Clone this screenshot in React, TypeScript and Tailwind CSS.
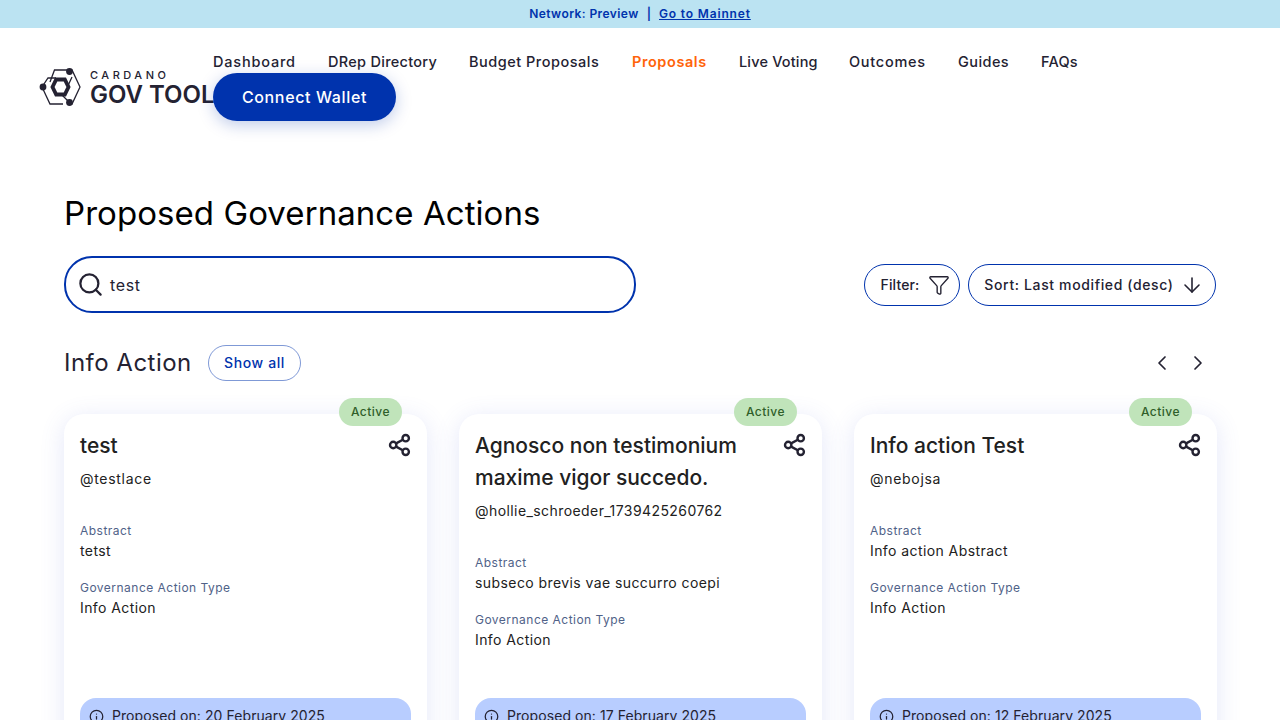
import { Search, Funnel, ArrowDown, ChevronLeft, ChevronRight, Info } from "lucide-react";

const nav = [
  ["Dashboard", "w-[83px] tracking-[0.055em] text-[#242232]"],
  ["DRep Directory", "w-[109px] tracking-[0.02em] text-[#242232]"],
  ["Budget Proposals", "w-[131px] tracking-[0.035em] text-[#242232]"],
  ["Proposals", "w-[75px] tracking-[0.04em] text-[#ff640a] font-semibold"],
  ["Live Voting", "w-[78px] tracking-[0.012em] text-[#242232]"],
  ["Outcomes", "w-[77px] tracking-[0.05em] text-[#242232]"],
  ["Guides", "w-[51px] tracking-[0.03em] text-[#242232]"],
  ["FAQs", "w-[37px] tracking-[0.015em] text-[#242232]"],
];

const cards = [
  { title: ["test"], handle: "@testlace", ht: "tracking-[0.05em]", abs: "tetst", date: "20 February 2025" },
  { title: ["Agnosco non testimonium", "maxime vigor succedo."], handle: "@hollie_schroeder_1739425260762", ht: "tracking-[0.03em]", abs: "subseco brevis vae succurro coepi", date: "17 February 2025" },
  { title: ["Info action Test"], handle: "@nebojsa", ht: "tracking-[0.05em]", abs: "Info action Abstract", date: "12 February 2025" },
];

function Logo() {
  return (
    <svg width="42" height="38" viewBox="0 0 42 38" fill="none" className="shrink-0 -ml-px">
      <path d="M11 14 L15.5 2 H30" stroke="#242232" strokeWidth="1.3" />
      <path d="M32 2 H33 L41 19 L33 36 H31" stroke="#242232" strokeWidth="1.3" />
      <path d="M3 19 L11 36 H24" stroke="#242232" strokeWidth="1.3" />
      <path d="M3 19 L9 10 H17" stroke="#242232" strokeWidth="1.3" />
      <path d="M31 35 L22 26 M33 9 L27 22" stroke="#242232" strokeWidth="1.3" />
      <path d="M13.5 19 L17.2 11.5 H25.8 L29.5 19 L25.8 26.5 H17.2 Z" stroke="#242232" strokeWidth="3.8" fill="#fff" />
      <circle cx="30.5" cy="3.5" r="3.4" fill="#242232" />
      <circle cx="4" cy="19" r="3.4" fill="#242232" />
      <circle cx="30.5" cy="34.5" r="3.4" fill="#242232" />
    </svg>
  );
}

function ShareIcon() {
  return (
    <svg width="24" height="24" viewBox="0 0 24 24" fill="none" stroke="#242232" strokeWidth="2.4" className="shrink-0">
      <circle cx="18.7" cy="5.2" r="3.2" />
      <circle cx="6.2" cy="12" r="3.2" />
      <circle cx="18.7" cy="18.8" r="3.2" />
      <path d="M9.1 10.4 15.8 6.8M9.1 13.6 15.8 17.2" />
    </svg>
  );
}

function Card({ c }: { c: (typeof cards)[number] }) {
  return (
    <div className="relative flex h-[360px] w-[363px] shrink-0 flex-col rounded-[20px] bg-white px-4 pb-4 pt-4 shadow-[0_4px_24px_rgba(86,104,220,0.16)]">
      <div className="absolute right-[25px] top-[-16px] flex h-7 w-[63px] items-center justify-center rounded-full bg-[#c0e4ba] text-xs font-medium tracking-[0.04em] text-[#2f5e2a]">
        Active
      </div>
      <div className="flex items-start justify-between">
        <div className="text-[21px] font-medium leading-8 text-[#212121]">
          {c.title.map((t) => (
            <div key={t} className="whitespace-nowrap">{t}</div>
          ))}
        </div>
        <div className="mt-[3px]"><ShareIcon /></div>
      </div>
      <div className={`mt-2 text-sm leading-[18px] text-[#212121] ${c.ht}`}>{c.handle}</div>
      <div className="mt-[34px] text-xs leading-[18px] tracking-[0.04em] text-[#506288]">Abstract</div>
      <div className="mt-px text-sm leading-5 tracking-[0.03em] text-[#212121]">{c.abs}</div>
      <div className="mt-[18px] text-xs leading-[18px] tracking-[0.04em] text-[#506288]">Governance Action Type</div>
      <div className="mt-px text-sm leading-5 tracking-[0.03em] text-[#212121]">Info Action</div>
      <div className="mt-auto flex h-[60px] shrink-0 items-start gap-2 rounded-2xl bg-[#b8cdff] pl-[9px] pt-2 text-sm tracking-[0.005em] text-[#242232]">
        <Info size={15} strokeWidth={2} className="mt-[3px] shrink-0" />
        <span>Proposed on: {c.date}</span>
      </div>
    </div>
  );
}

export default function App() {
  return (
    <div className="h-screen overflow-hidden bg-white font-['Inter','Liberation_Sans',sans-serif]">
      <div className="flex h-7 items-center justify-center gap-2 bg-[#bbe3f2] text-xs font-semibold text-[#0033ad]">
        <span className="tracking-[0.035em]">Network: Preview</span>
        <span>|</span>
        <span className="tracking-[0.07em] underline">Go to Mainnet</span>
      </div>
      <header className="flex items-center pb-[11px] pl-10 pr-10 pt-6">
        <div className="flex w-[173px] shrink-0 items-center gap-[9px]">
          <Logo />
          <div className="flex flex-col pt-[3px]">
            <span className="text-[11px] font-medium leading-[13px] tracking-[0.32em] text-[#242232]">CARDANO</span>
            <span className="whitespace-nowrap text-[24px] font-semibold leading-[26px] text-[#242232]">GOV TOOL</span>
          </div>
        </div>
        <nav className="flex flex-1 flex-wrap items-start gap-x-8 text-[14.5px] font-medium">
          {nav.map(([t, cl]) => (
            <span key={t} className={`h-[21px] whitespace-nowrap leading-[19px] ${cl}`}>
              {t}
            </span>
          ))}
          <button className="h-12 w-[183px] rounded-full bg-[#0033ad] text-base font-medium tracking-[0.04em] text-white shadow-[0_4px_16px_rgba(0,51,173,0.25)]">
            Connect Wallet
          </button>
        </nav>
      </header>
      <main className="px-16 pt-[59px]">
        <h1 className="text-[33px] leading-[44px] tracking-[0.002em] text-black">Proposed Governance Actions</h1>
        <div className="mt-[21px] flex items-center justify-between">
          <div className="flex h-[57px] w-[572px] items-center gap-[6px] rounded-[28px] border-2 border-[#0033ad] pl-[11px] text-base tracking-[0.04em] text-[#242232]">
            <Search size={27} strokeWidth={2} />
            <span>test</span>
          </div>
          <div className="flex gap-2">
            <div className="flex h-[42px] w-[96px] items-center justify-center gap-2 rounded-full border border-[#0033ad] pl-[6px] text-sm font-medium tracking-[0.01em] text-[#242232]">
              Filter:
              <Funnel size={22} strokeWidth={1.5} />
            </div>
            <div className="flex h-[42px] w-[248px] items-center justify-center gap-[6px] rounded-full border border-[#0033ad] pl-1 text-sm font-medium tracking-[0.045em] text-[#242232]">
              Sort: Last modified (desc)
              <ArrowDown size={24} strokeWidth={1.6} />
            </div>
          </div>
        </div>
        <div className="mt-8 flex h-9 items-center">
          <h2 className="w-[127px] whitespace-nowrap text-2xl tracking-[0.02em] text-[#242232]">Info Action</h2>
          <button className="ml-[17px] h-9 w-[93px] rounded-full border border-[#0033ad]/50 text-sm font-medium tracking-[0.045em] text-[#0033ad]">Show all</button>
          <div className="ml-auto mr-[6px] flex gap-3 text-[#242232]">
            <ChevronLeft size={24} strokeWidth={1.7} />
            <ChevronRight size={24} strokeWidth={1.7} />
          </div>
        </div>
        <div className="mt-[33px] flex gap-8">
          {cards.map((c) => (
            <Card key={c.handle} c={c} />
          ))}
        </div>
      </main>
    </div>
  );
}
